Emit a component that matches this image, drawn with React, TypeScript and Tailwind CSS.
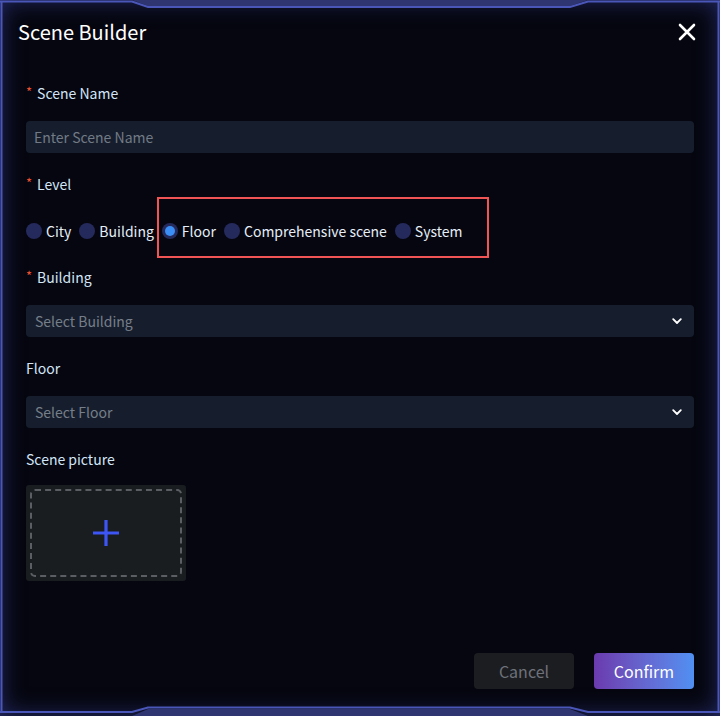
import React from "react";

const font = { fontFamily: '"Noto Sans CJK SC", "Source Sans Pro", "Noto Sans", sans-serif' };

function Frame() {
  return (
    <svg className="pointer-events-none absolute inset-0" width="720" height="716" viewBox="0 0 720 716">
      <polygon points="132,0 148,6 570,6 588,0" fill="#2f3570" />
      <polygon points="132,716 148,709 570,709 588,716" fill="#2f3570" />
      <path d="M0,1.5 L132,1.5 L148,7 L570,7 L588,1.5 L720,1.5" fill="none" stroke="#4b57b8" strokeWidth="2" />
      <path d="M0,712 L132,712 L148,707.5 L570,707.5 L588,712 L720,712" fill="none" stroke="#4b57b8" strokeWidth="2" />
      <line x1="1.5" y1="1" x2="1.5" y2="713" stroke="#4b57b8" strokeWidth="2" />
      <line x1="718.5" y1="1" x2="718.5" y2="713" stroke="#4b57b8" strokeWidth="2" />
    </svg>
  );
}

function Label({ text, required, className }: { text: string; required?: boolean; className?: string }) {
  return (
    <div className={"flex h-[22px] items-center pb-[2px] text-[14px] leading-[20px] text-[#d3e5f7] " + (className ?? "")}>
      {required && <span className="mr-[5px] mt-[-2px] text-[13px] text-[#f0502f]">*</span>}
      <span>{text}</span>
    </div>
  );
}

function Chevron() {
  return (
    <svg width="10" height="7" viewBox="0 0 10 7">
      <path d="M1.2,1.2 L5,5 L8.8,1.2" fill="none" stroke="#ffffff" strokeWidth="1.8" strokeLinecap="round" strokeLinejoin="round" />
    </svg>
  );
}

function Select({ placeholder, className }: { placeholder: string; className?: string }) {
  return (
    <div className={"flex h-[32px] items-center justify-between rounded-[4px] bg-[#161e2e] pl-[9px] pr-[12px] " + (className ?? "")}>
      <span className="text-[14px] text-[#767e89]">{placeholder}</span>
      <Chevron />
    </div>
  );
}

function Radio({ label, checked }: { label: string; checked?: boolean }) {
  return (
    <div className="flex items-center gap-[4px]">
      <span className="flex h-[16px] w-[16px] items-center justify-center rounded-full bg-[#252a5c]">
        {checked && <span className="h-[10px] w-[10px] rounded-full bg-[#3a8ef5]" />}
      </span>
      <span className="text-[14px] text-[#e6eef8]">{label}</span>
    </div>
  );
}

export default function App() {
  return (
    <div
      className="relative flex h-[716px] w-[720px] flex-col overflow-hidden bg-[#05060f] shadow-[inset_0_0_24px_rgba(62,72,170,0.6)]"
      style={font}
    >
      <Frame />
      <div className="flex items-center justify-between pl-[18px] pr-[24px] pt-[18px]">
        <span className="text-[20px] leading-[28px] text-white">Scene Builder</span>
        <svg width="18" height="18" viewBox="0 0 18 18">
          <path d="M2,2 L16,16 M16,2 L2,16" stroke="#ffffff" strokeWidth="2.6" strokeLinecap="round" />
        </svg>
      </div>
      <div className="flex flex-col px-[26px]">
        <Label text="Scene Name" required className="mt-[37px]" />
        <div className="mt-[16px] flex h-[32px] items-center rounded-[4px] bg-[#161e2e] pl-[8px]">
          <span className="text-[14px] text-[#727a85]">Enter Scene Name</span>
        </div>
        <Label text="Level" required className="mt-[21px]" />
        <div className="relative mt-[23px] flex h-[24px] items-center gap-[8px]">
          <Radio label="City" />
          <Radio label="Building" />
          <Radio label="Floor" checked />
          <Radio label="Comprehensive scene" />
          <Radio label="System" />
          <div className="absolute left-[131px] top-[-22px] h-[61px] w-[332px] border-2 border-[#f05454]" />
        </div>
        <Label text="Building" required className="mt-[24px]" />
        <Select placeholder="Select Building" className="mt-[16px]" />
        <Label text="Floor" className="mt-[21px]" />
        <Select placeholder="Select Floor" className="mt-[16px]" />
        <Label text="Scene picture" className="mt-[21px]" />
        <div className="mt-[14px] flex h-[96px] w-[160px] items-center justify-center rounded-[3px] bg-[#1a1d1f] p-[4px]">
          <div className="flex h-full w-full items-center justify-center rounded-[5px] border-2 border-dashed border-[#5b5f64]">
            <svg width="28" height="28" viewBox="0 0 28 28">
              <path d="M14,1 L14,27 M1,14 L27,14" stroke="#3d55f5" strokeWidth="3.2" />
            </svg>
          </div>
        </div>
      </div>
      <div className="mt-auto flex justify-end gap-[20px] pb-[27px] pr-[26px]">
        <button className="h-[36px] w-[100px] rounded-[4px] bg-[#1c1d21] text-[16px] text-[#6e727a]">Cancel</button>
        <button className="h-[36px] w-[100px] rounded-[4px] bg-gradient-to-r from-[#6a3aae] to-[#4f90f2] text-[16px] text-white">
          Confirm
        </button>
      </div>
    </div>
  );
}
